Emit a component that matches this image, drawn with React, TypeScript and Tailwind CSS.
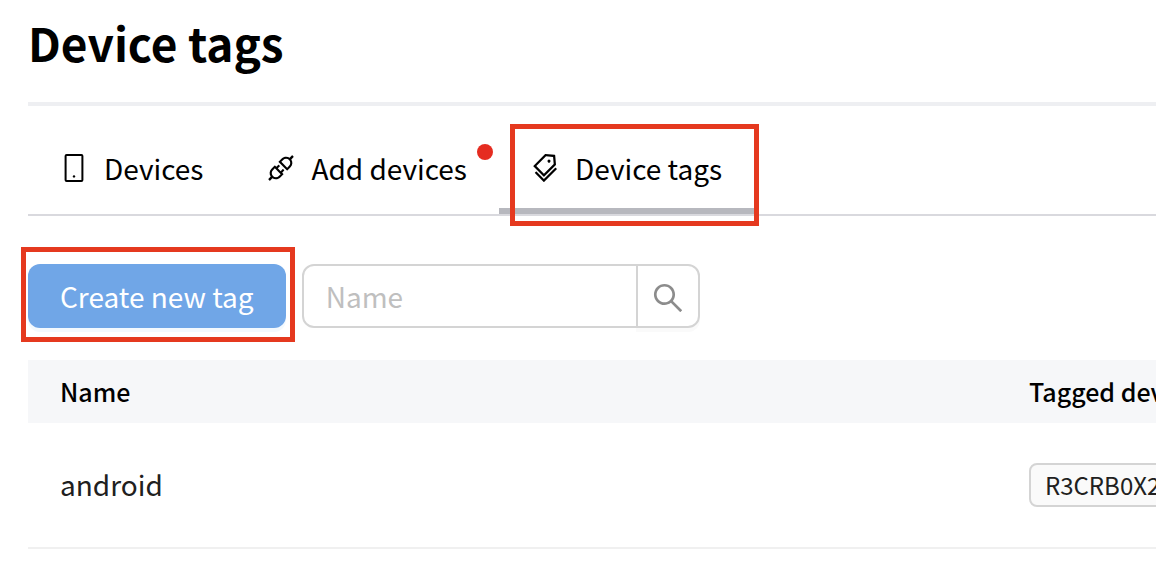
import type { ReactNode } from "react";
import { AiOutlineApi, AiOutlineSearch, AiOutlineTags } from "react-icons/ai";

function PhoneIcon() {
  return (
    <svg viewBox="-2 -2 32 32" className="size-8" fill="none" aria-hidden="true">
      <rect x="5.6" y="1" width="16.8" height="26" rx="1" stroke="currentColor" strokeWidth="2" />
      <circle cx="14" cy="22.4" r="1.2" fill="currentColor" />
    </svg>
  );
}

function Highlight({ className }: { className: string }) {
  return (
    <span
      aria-hidden="true"
      className={`pointer-events-none absolute z-10 border-[5px] border-[#e5391f] ${className}`}
    />
  );
}

function Tab({ icon, label, active, children }: { icon: ReactNode; label: string; active?: boolean; children?: ReactNode }) {
  return (
    <a
      href="#"
      aria-current={active ? "page" : undefined}
      className={`relative flex h-[108px] items-center gap-3.5 border-b-[6px] pt-[22px] pr-8 pl-[30px] ${active ? "border-[#b7b8be]" : "border-transparent"}`}
    >
      {icon}
      <span>{label}</span>
      {children}
    </a>
  );
}

export default function App() {
  return (
    <main className="overflow-hidden bg-white pl-7 font-['Noto_Sans_CJK_JP',sans-serif] text-[28px] leading-10 text-black">
      <h1 className="flex h-[102px] items-start pt-1.5 text-[46px] leading-[72px] font-bold">Device tags</h1>

      <nav className="flex border-t-4 border-b-2 border-t-[#eeeff2] border-b-[#d9d9de] whitespace-nowrap">
        <Tab icon={<PhoneIcon />} label="Devices" />
        <Tab icon={<AiOutlineApi className="size-8" />} label="Add devices">
          <span className="absolute top-[38px] right-1.5 size-4 rounded-full bg-[#e52c20]" />
        </Tab>
        <Tab icon={<AiOutlineTags className="size-8" />} label="Device tags" active>
          <Highlight className="top-[18px] -right-[5px] -bottom-[18px] left-[11px]" />
        </Tab>
      </nav>

      <div className="flex gap-4 pt-12 pb-8">
        <div className="relative">
          <button
            type="button"
            className="h-16 rounded-xl bg-[#70a6e7] px-8 whitespace-nowrap text-white shadow-[0_4px_0_#f3f9fe]"
          >
            Create new tag
          </button>
          <Highlight className="-top-[17px] -right-[9px] -bottom-[14px] -left-[7px]" />
        </div>
        <form className="flex h-16" onSubmit={(event) => event.preventDefault()}>
          <input
            type="text"
            aria-label="Name"
            placeholder="Name"
            className="w-[336px] rounded-l-xl border-2 border-[#d4d4d4] px-[22px] outline-none placeholder:text-[#bfbfbf]"
          />
          <button
            type="submit"
            aria-label="Search"
            className="-ml-0.5 flex w-16 items-center justify-center rounded-r-xl border-2 border-[#d4d4d4] pt-1 text-[#8c8c8c] shadow-[0_4px_0_#fafafa]"
          >
            <AiOutlineSearch className="size-9" />
          </button>
        </form>
      </div>

      <table className="w-full min-w-[1400px] table-fixed text-left whitespace-nowrap">
        <thead>
          <tr className="h-[63px] bg-[#f6f7f9] text-[25px]">
            <th className="w-[969px] px-8 pb-0.5 font-medium">Name</th>
            <th className="px-8 pb-0.5 font-medium">Tagged devices</th>
          </tr>
        </thead>
        <tbody className="text-[#202020]">
          <tr className="h-[125px] border-b-2 border-[#f0f0f0]">
            <td className="px-8 pb-0.5">android</td>
            <td className="px-8">
              <span className="flex h-11 w-fit items-center rounded-lg border-2 border-[#d4d4d4] bg-[#fafafa] px-3.5 text-2xl">
                R3CRB0X2
              </span>
            </td>
          </tr>
        </tbody>
      </table>
    </main>
  );
}
